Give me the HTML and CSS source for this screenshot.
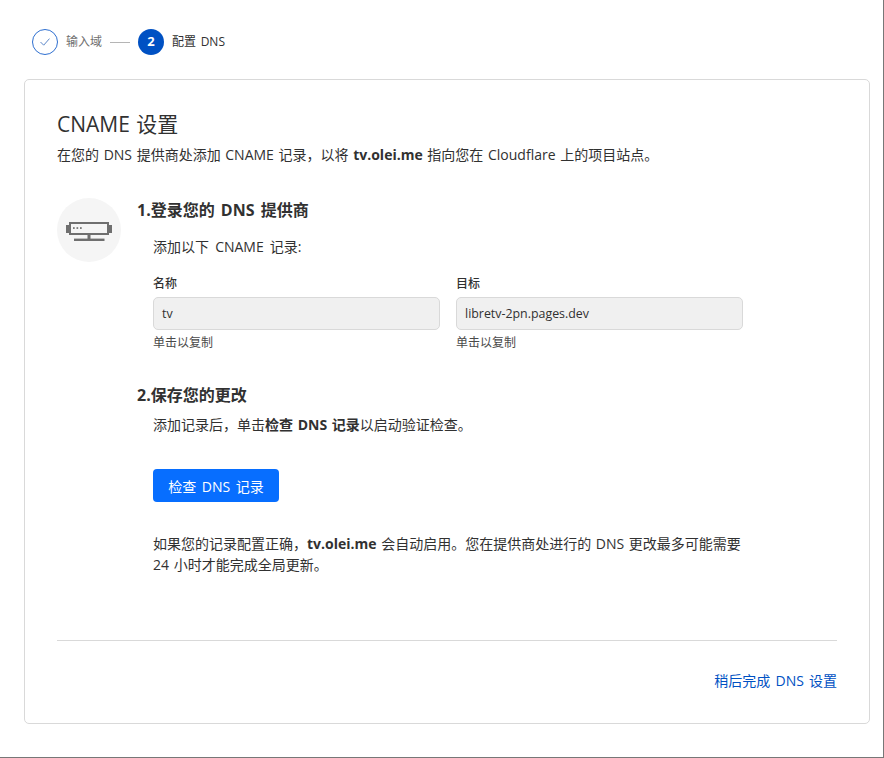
FILE: index.html
```html
<!DOCTYPE html>
<html lang="zh-CN">
<head>
<meta charset="utf-8">
<title>配置 DNS</title>
<link rel="stylesheet" href="styles.css">
</head>
<body>
<div class="page">
  <ol class="stepper">
    <li class="step step-done">
      <span class="step-circle">
        <svg width="10" height="8" viewBox="0 0 10 8"><path d="M.5 4 3.7 7.2 9.5 .6" fill="none" stroke="#5b86c8" stroke-width="1"/></svg>
      </span>
      <span class="step-label">输入域</span>
    </li>
    <li class="step-line"></li>
    <li class="step step-active">
      <span class="step-circle">2</span>
      <span class="step-label">配置 DNS</span>
    </li>
  </ol>
  <main class="card">
    <h1 class="title">CNAME 设置</h1>
    <p class="intro">在您的 DNS 提供商处添加 CNAME 记录，以将 <b>tv.olei.me</b> 指向您在 Cloudflare 上的项目站点。</p>
    <div class="body">
      <div class="badge">
        <svg class="badge-icon" width="46" height="19" viewBox="0 0 46 19">
          <rect x="0" y="3" width="3" height="8" fill="#6f6f6f"/>
          <rect x="43" y="3" width="3" height="8" fill="#6f6f6f"/>
          <rect x="4" y="1" width="38" height="11" fill="none" stroke="#6f6f6f" stroke-width="2"/>
          <rect x="7" y="5.2" width="1.7" height="1.7" fill="#6f6f6f"/>
          <rect x="10.5" y="5.2" width="1.7" height="1.7" fill="#6f6f6f"/>
          <rect x="14" y="5.2" width="1.7" height="1.7" fill="#6f6f6f"/>
          <rect x="21.5" y="13" width="3" height="4" fill="#6f6f6f"/>
          <rect x="8" y="16.6" width="30.5" height="2.4" fill="#6f6f6f"/>
        </svg>
      </div>
      <div class="steps">
        <h2 class="step-title">1.登录您的 DNS 提供商</h2>
        <div class="indent">
          <p class="add-line">添加以下 CNAME 记录:</p>
          <div class="fields">
            <div class="field">
              <label class="field-label">名称</label>
              <div class="field-value">tv</div>
              <div class="field-hint">单击以复制</div>
            </div>
            <div class="field">
              <label class="field-label">目标</label>
              <div class="field-value">libretv-2pn.pages.dev</div>
              <div class="field-hint">单击以复制</div>
            </div>
          </div>
        </div>
        <h2 class="step-title step-title-2">2.保存您的更改</h2>
        <div class="indent">
          <p class="save-line">添加记录后，单击<b>检查 DNS 记录</b>以启动验证检查。</p>
          <button class="primary" type="button">检查 DNS 记录</button>
          <p class="note">如果您的记录配置正确，<b>tv.olei.me</b> 会自动启用。您在提供商处进行的 DNS 更改最多可能需要 24 小时才能完成全局更新。</p>
        </div>
      </div>
    </div>
    <div class="footer">
      <a class="later" href="#">稍后完成 DNS 设置</a>
    </div>
  </main>
</div>
</body>
</html>
```
FILE: styles.css
```css
* { box-sizing: border-box; }
html, body { margin: 0; padding: 0; background: #fff; }
body {
  font-family: "Open Sans", "Noto Sans CJK SC", sans-serif;
  color: #313131;
  font-size: 14px;
  word-spacing: 1px;
}
p, h1, h2, ol { margin: 0; padding: 0; }
.page {
  width: 884px;
  height: 758px;
  border-right: 1px solid #777;
  border-bottom: 1px solid #777;
  padding: 29px 13px 0 24px;
}
.stepper {
  list-style: none;
  display: flex;
  align-items: center;
  height: 26px;
  padding-left: 8px;
  margin-bottom: 24px;
}
.step { display: flex; align-items: center; gap: 8px; }
.step-circle {
  width: 26px;
  height: 26px;
  border-radius: 50%;
  display: flex;
  align-items: center;
  justify-content: center;
}
.step-done .step-circle { border: 1px solid #2e6fd0; }
.step-active .step-circle { background: #0051c3; color: #fff; font-weight: 700; font-size: 13px; padding-bottom: 2px; }
.step-label { font-size: 12px; padding-bottom: 2px; }
.step-active .step-label { word-spacing: 1.5px; }
.step-done .step-label { color: #6f6f6f; }
.step-line { width: 20px; height: 1px; background: #b5b5b5; margin: 0 8px; }
.card {
  width: 846px;
  height: 645px;
  border: 1px solid #d9d9d9;
  border-radius: 5px;
  padding: 32px;
  display: flex;
  flex-direction: column;
}
.title { font-size: 21px; font-weight: 400; line-height: 24px; }
.intro { font-size: 14px; line-height: 20px; margin-top: 9px; }
.body { display: flex; margin-top: 33px; flex: 1; }
.badge {
  width: 64px;
  height: 64px;
  border-radius: 50%;
  background: #f5f5f5;
  flex: none;
  display: flex;
  align-items: center;
  justify-content: center;
  margin-right: 16px;
}
.badge-icon { margin-top: 3px; }
.steps { flex: 1; }
.step-title { font-size: 16px; font-weight: 700; line-height: 24px; word-spacing: 2px; }
.step-title-2 { margin-top: 32px; }
.indent { padding-left: 16px; width: 606px; }
.add-line { font-size: 14px; line-height: 20px; margin-top: 15px; word-spacing: 2.5px; }
.fields { display: flex; gap: 16px; margin-top: 19px; }
.field { width: 287px; }
.field-label { display: block; font-size: 12px; line-height: 16px; font-weight: 500; }
.field-value {
  margin-top: 5px;
  height: 33px;
  background: #f0f0f0;
  border: 1px solid #d9d9d9;
  border-radius: 5px;
  padding: 0 8px;
  display: flex;
  align-items: center;
  font-size: 12.4px;
}
.field-hint { font-size: 12px; line-height: 16px; margin-top: 5px; color: #4a4a4a; }
.save-line { font-size: 14px; line-height: 20px; margin-top: 8px; }
.primary {
  display: block;
  margin-top: 34px;
  width: 126px;
  height: 33px;
  background: #076eff;
  border: 0;
  border-radius: 4px;
  color: #fff;
  font: inherit;
  font-size: 14px;
  word-spacing: 2px;
}
.note { font-size: 14px; line-height: 21px; margin-top: 31px; }
.footer {
  border-top: 1px solid #d9d9d9;
  height: 51px;
  display: flex;
  align-items: flex-end;
  justify-content: flex-end;
}
.later { color: #0051c3; text-decoration: none; font-size: 14px; line-height: 20px; word-spacing: 1.5px; }
```
